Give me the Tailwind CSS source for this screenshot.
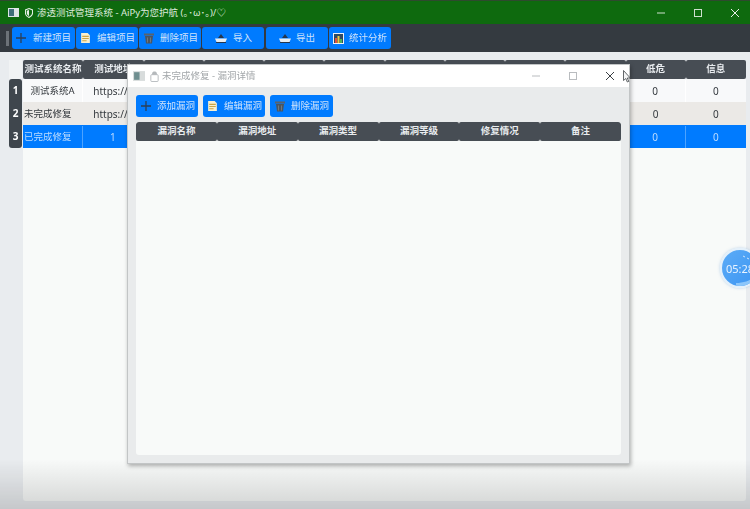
<!DOCTYPE html>
<html lang="zh-CN">
<head>
    <meta charset="UTF-8">
    <title>渗透测试管理系统</title>
    <script src="https://cdn.jsdelivr.net/npm/@tailwindcss/browser@4"></script>
</head>
<body class="w-[750px] h-[509px] overflow-hidden bg-[#e9ecef] font-['Noto_Sans','Noto_Sans_CJK_SC',sans-serif]">
<div class="relative w-[750px] h-[509px] overflow-hidden flex flex-col blur-[0.45px]">

    <!-- title bar -->
    <div class="h-6 shrink-0 bg-[#0e6a0e] border-t border-[#2e4a2e] flex items-center text-[#dfeadf]">
        <svg class="ml-2 w-[11px] h-[9px]" viewBox="0 0 11 9"><rect width="11" height="9" fill="#dfe6e6"/><rect x="1" y="1" width="5" height="7" fill="#3f6f78"/></svg>
        <svg class="ml-[6px] w-[8px] h-[10px]" viewBox="0 0 9 11"><path d="M4.5.5 8.5 2v3.5c0 2.400-1.800 4-4 5-2.200-1-4-2.600-4-5V2z" fill="none" stroke="#e6efe6" stroke-width="1.200"/><path d="M4.500 2v7c-1.400-.8-2.500-2-2.500-3.500V3z" fill="#e6efe6"/></svg>
        <span class="ml-[4px] text-[9.5px] leading-none whitespace-nowrap">渗透测试管理系统 - AiPy为您护航 (｡･ω･｡)/♡</span>
        <div class="ml-auto flex items-center">
            <svg class="w-[10px] h-[10px] mr-[27px]" viewBox="0 0 10 10"><path d="M1 5h8" stroke="#cfe0cf" stroke-width="1"/></svg>
            <svg class="w-[10px] h-[10px] mr-[27px]" viewBox="0 0 10 10"><rect x="1.500" y="1.500" width="7" height="7" fill="none" stroke="#cfe0cf" stroke-width="1"/></svg>
            <svg class="w-[10px] h-[10px] mr-2.5" viewBox="0 0 10 10"><path d="M1 1l8 8M9 1l-8 8" stroke="#e6efe6" stroke-width="1"/></svg>
        </div>
    </div>

    <!-- toolbar -->
    <div class="h-[28px] shrink-0 bg-[#343a40] flex items-center pl-1.5">
        <div class="w-[3px] h-[15px] bg-[#6c7278] mr-[3px]"></div>
        <div class="flex gap-px text-[9.5px] text-[#cfe3fb]">
            <button class="w-[63px] h-[22px] bg-[#007bff] rounded-[3px] flex items-center pl-1">
                <svg class="w-[10px] h-[10px] shrink-0" viewBox="0 0 10 10"><path d="M5 0v10M0 5h10" stroke="#2d3f55" stroke-width="1.300"/></svg>
                <span class="ml-[7px] whitespace-nowrap">新建项目</span>
            </button>
            <button class="w-[62px] h-[22px] bg-[#007bff] rounded-[3px] flex items-center pl-1">
                <svg class="w-[11px] h-[12px] shrink-0" viewBox="0 0 10 11"><path d="M1 1h6l2 2v7H1z" fill="#f6efd0"/><path d="M2 4h6M2 6h6M2 8h4" stroke="#c9a545" stroke-width="1"/></svg>
                <span class="ml-[6px] whitespace-nowrap">编辑项目</span>
            </button>
            <button class="w-[62px] h-[22px] bg-[#007bff] rounded-[3px] flex items-center pl-[5px]">
                <svg class="w-[10px] h-[12px] shrink-0" viewBox="0 0 10 11"><path d="M0 1h10v2H0z" fill="#59636d"/><path d="M1 3.500h8l-1 7.500H2z" fill="#4c5660"/><path d="M3.500 5v5M6.500 5v5" stroke="#818a92" stroke-width=".7"/></svg>
                <span class="ml-[6px] whitespace-nowrap">删除项目</span>
            </button>
            <button class="w-[62px] h-[22px] bg-[#007bff] rounded-[3px] flex items-center pl-[13px]">
                <svg class="w-[12px] h-[9px] shrink-0" viewBox="0 0 12 9"><path d="M6 0 9 4H3z" fill="#25364d"/><path d="M0 4.500h12L10.500 8h-9z" fill="#e8edf2"/><path d="M1 8h10v1H1z" fill="#25364d"/></svg>
                <span class="ml-[6px] whitespace-nowrap">导入</span>
            </button>
            <button class="w-[62px] h-[22px] bg-[#007bff] rounded-[3px] flex items-center pl-[13px] ml-px">
                <svg class="w-[12px] h-[9px] shrink-0" viewBox="0 0 12 9"><path d="M6 0 9 4H3z" fill="#25364d"/><path d="M0 4.500h12L10.500 8h-9z" fill="#e8edf2"/><path d="M1 8h10v1H1z" fill="#25364d"/></svg>
                <span class="ml-[5px] whitespace-nowrap">导出</span>
            </button>
            <button class="w-[62px] h-[22px] bg-[#007bff] rounded-[3px] flex items-center pl-1">
                <svg class="w-[11px] h-[11px] shrink-0" viewBox="0 0 11 11"><rect width="11" height="11" fill="#eef1f3"/><rect x="1" y="1" width="9" height="9" fill="#2f4a63"/><rect x="2" y="5" width="2" height="5" fill="#e2503c"/><rect x="4.500" y="3" width="2" height="7" fill="#f1c93b"/><rect x="7" y="6" width="2" height="4" fill="#4bb25a"/></svg>
                <span class="ml-[5px] whitespace-nowrap">统计分析</span>
            </button>
        </div>
    </div>

    <!-- main area -->
    <div class="flex-1 flex pt-2 pl-[9px] pb-[8px] pr-1">
        <div class="w-[13px] shrink-0 flex flex-col text-[10px] font-bold text-white">
            <div class="h-[19px] bg-[#f1f3f4]"></div>
            <div class="h-[23px] bg-[#3f464d] rounded-t-[3px] flex items-center justify-center">1</div>
            <div class="h-[23px] bg-[#3f464d] flex items-center justify-center">2</div>
            <div class="h-[23px] bg-[#3f464d] rounded-b-[3px] flex items-center justify-center">3</div>
        </div>
        <div class="flex-1 ml-px bg-[#f8faf9] rounded-b-[3px]">
            <div class="grid grid-cols-12 h-[19px] text-[9.5px] font-bold text-[#e9ecef] bg-[#e9ecef]">
                <div class="bg-[#474d54] rounded-[2px] flex items-center justify-center whitespace-nowrap">测试系统名称</div>
                <div class="bg-[#474d54] rounded-[2px] flex items-center justify-center whitespace-nowrap">测试地址</div>
                <div class="bg-[#474d54] rounded-[2px]"></div>
                <div class="bg-[#474d54] rounded-[2px]"></div>
                <div class="bg-[#474d54] rounded-[2px]"></div>
                <div class="bg-[#474d54] rounded-[2px]"></div>
                <div class="bg-[#474d54] rounded-[2px]"></div>
                <div class="bg-[#474d54] rounded-[2px]"></div>
                <div class="bg-[#474d54] rounded-[2px]"></div>
                <div class="bg-[#474d54] rounded-[2px]"></div>
                <div class="bg-[#474d54] rounded-[2px] flex items-center justify-center">低危</div>
                <div class="bg-[#474d54] rounded-[2px] flex items-center justify-center">信息</div>
            </div>
            <div class="grid grid-cols-12 h-[23px] pt-px items-stretch text-[9.5px] text-[#33383d] bg-[#f8f9fa] divide-x divide-white">
                <div class="flex items-center justify-center whitespace-nowrap">测试系统A</div>
                <div class="flex items-center pl-2.5 text-[10px] whitespace-nowrap">https://</div>
                <div></div><div></div><div></div><div></div><div></div><div></div><div></div><div></div>
                <div class="flex items-center justify-center text-[10px]">0</div>
                <div class="flex items-center justify-center text-[10px]">0</div>
            </div>
            <div class="grid grid-cols-12 h-[23px] pt-px items-stretch text-[9.5px] text-[#33383d] bg-[#ebe9e6]">
                <div class="flex items-center pl-px whitespace-nowrap">未完成修复</div>
                <div class="flex items-center pl-2.5 text-[10px] whitespace-nowrap">https://</div>
                <div></div><div></div><div></div><div></div><div></div><div></div><div></div><div></div>
                <div class="flex items-center justify-center text-[10px]">0</div>
                <div class="flex items-center justify-center text-[10px]">0</div>
            </div>
            <div class="grid grid-cols-12 h-[23px] pt-px items-stretch text-[9.5px] text-[#bcdcff] bg-[#007bff] divide-x divide-[#4da3ff]">
                <div class="flex items-center pl-px whitespace-nowrap">已完成修复</div>
                <div class="flex items-center justify-center text-[10px]">1</div>
                <div></div><div></div><div></div><div></div><div></div><div></div><div></div><div></div>
                <div class="flex items-center justify-center text-[10px]">0</div>
                <div class="flex items-center justify-center text-[10px]">0</div>
            </div>
        </div>
    </div>

    <!-- video player shade along the bottom -->
    <div class="absolute left-0 right-0 bottom-0 h-[50px] bg-gradient-to-b from-black/0 to-black/15"></div>

    <!-- detail window -->
    <div class="absolute left-[127px] top-[64px] w-[503px] h-[400px] flex flex-col bg-[#e9ebec] border border-[#c2c5c6] shadow-[1px_2px_4px_rgba(0,0,0,0.3)]">
        <div class="h-[22px] shrink-0 bg-white flex items-center text-[#a3a7aa]">
            <svg class="ml-[5px] w-[12px] h-[10px]" viewBox="0 0 11 9"><rect width="11" height="9" fill="#d8dcdc"/><rect x="1" y="1" width="5" height="7" fill="#6f8f90"/></svg>
            <svg class="ml-[5px] w-[9px] h-[11px]" viewBox="0 0 9 12"><rect x=".5" y="4" width="8" height="7.500" rx="1" fill="none" stroke="#b4b8bb"/><path d="M2 4V2.500C2 1 3.200.5 4.500.5S7 1 7 2.500V4z" fill="#b4b8bb"/></svg>
            <span class="ml-[3px] text-[9.5px] whitespace-nowrap">未完成修复 - 漏洞详情</span>
            <div class="ml-auto flex items-center">
                <svg class="w-[10px] h-[10px] mr-[27px]" viewBox="0 0 10 10"><path d="M1 5h8" stroke="#b9bcbf" stroke-width="1"/></svg>
                <svg class="w-[10px] h-[10px] mr-[27px]" viewBox="0 0 10 10"><rect x="1.500" y="1.500" width="7" height="7" fill="none" stroke="#b9bcbf" stroke-width="1"/></svg>
                <svg class="w-[10px] h-[10px] mr-[14px]" viewBox="0 0 10 10"><path d="M1 1l8 8M9 1l-8 8" stroke="#3a3f44" stroke-width="1"/></svg>
            </div>
        </div>
        <div class="flex-1 flex flex-col px-2 pt-2 pb-2">
            <div class="flex gap-[5px] text-[9.5px] text-[#cfe3fb]">
                <button class="w-[62px] h-[22px] bg-[#007bff] rounded-[3px] flex items-center pl-[5px]">
                    <svg class="w-[10px] h-[10px] shrink-0" viewBox="0 0 10 10"><path d="M5 0v10M0 5h10" stroke="#2d3f55" stroke-width="1.300"/></svg>
                    <span class="ml-[6px] whitespace-nowrap">添加漏洞</span>
                </button>
                <button class="w-[62px] h-[22px] bg-[#007bff] rounded-[3px] flex items-center pl-1">
                    <svg class="w-[11px] h-[12px] shrink-0" viewBox="0 0 10 11"><path d="M1 1h6l2 2v7H1z" fill="#f6efd0"/><path d="M2 4h6M2 6h6M2 8h4" stroke="#c9a545" stroke-width="1"/></svg>
                    <span class="ml-[6px] whitespace-nowrap">编辑漏洞</span>
                </button>
                <button class="w-[63px] h-[22px] bg-[#007bff] rounded-[3px] flex items-center pl-[5px]">
                    <svg class="w-[10px] h-[12px] shrink-0" viewBox="0 0 10 11"><path d="M0 1h10v2H0z" fill="#59636d"/><path d="M1 3.500h8l-1 7.500H2z" fill="#4c5660"/><path d="M3.500 5v5M6.500 5v5" stroke="#818a92" stroke-width=".7"/></svg>
                    <span class="ml-[6px] whitespace-nowrap">删除漏洞</span>
                </button>
            </div>
            <div class="mt-[5px] flex-1 flex flex-col bg-[#f8faf9] rounded-[3px] overflow-hidden">
                <div class="grid grid-cols-6 h-[19px] shrink-0 text-[9.5px] font-bold text-[#e9ecef] bg-[#e9ebec]">
                    <div class="bg-[#474d54] rounded-[2px] flex items-center justify-center">漏洞名称</div>
                    <div class="bg-[#474d54] rounded-[2px] flex items-center justify-center">漏洞地址</div>
                    <div class="bg-[#474d54] rounded-[2px] flex items-center justify-center">漏洞类型</div>
                    <div class="bg-[#474d54] rounded-[2px] flex items-center justify-center">漏洞等级</div>
                    <div class="bg-[#474d54] rounded-[2px] flex items-center justify-center">修复情况</div>
                    <div class="bg-[#474d54] rounded-[2px] flex items-center justify-center">备注</div>
                </div>
            </div>
        </div>
    </div>

    <!-- mouse cursor -->
    <svg class="absolute left-[623px] top-[70px] w-[8px] h-[13px]" viewBox="0 0 8 13"><path d="M.5.500v10l2.300-2 1.500 3.500 1.500-.6-1.500-3.400h3z" fill="#f4f5f6" stroke="#3d4246" stroke-width=".8"/></svg>

    <!-- timer widget -->
    <div class="absolute left-[720px] top-[248px] w-[40px] h-[40px] rounded-full overflow-hidden bg-gradient-to-br from-[#5cacf7] to-[#3a94f2] border-2 border-[#e3f0fb] shadow-[0_0_3px_rgba(120,170,220,0.5)] flex items-center pl-[4px]">
        <span class="text-[11px] text-[#e8f3ff] leading-none">05:28</span>
        <svg class="absolute left-0 top-0 w-[36px] h-[36px]" viewBox="0 0 36 36"><path d="M21 6l2 1M25 8l2 1" stroke="#cfe5fb" stroke-width="1"/><path d="M14 33c7 0 14-2 19-7l3 10H14z" fill="#8cc6fa"/></svg>
    </div>
</div>
</body>
</html>
